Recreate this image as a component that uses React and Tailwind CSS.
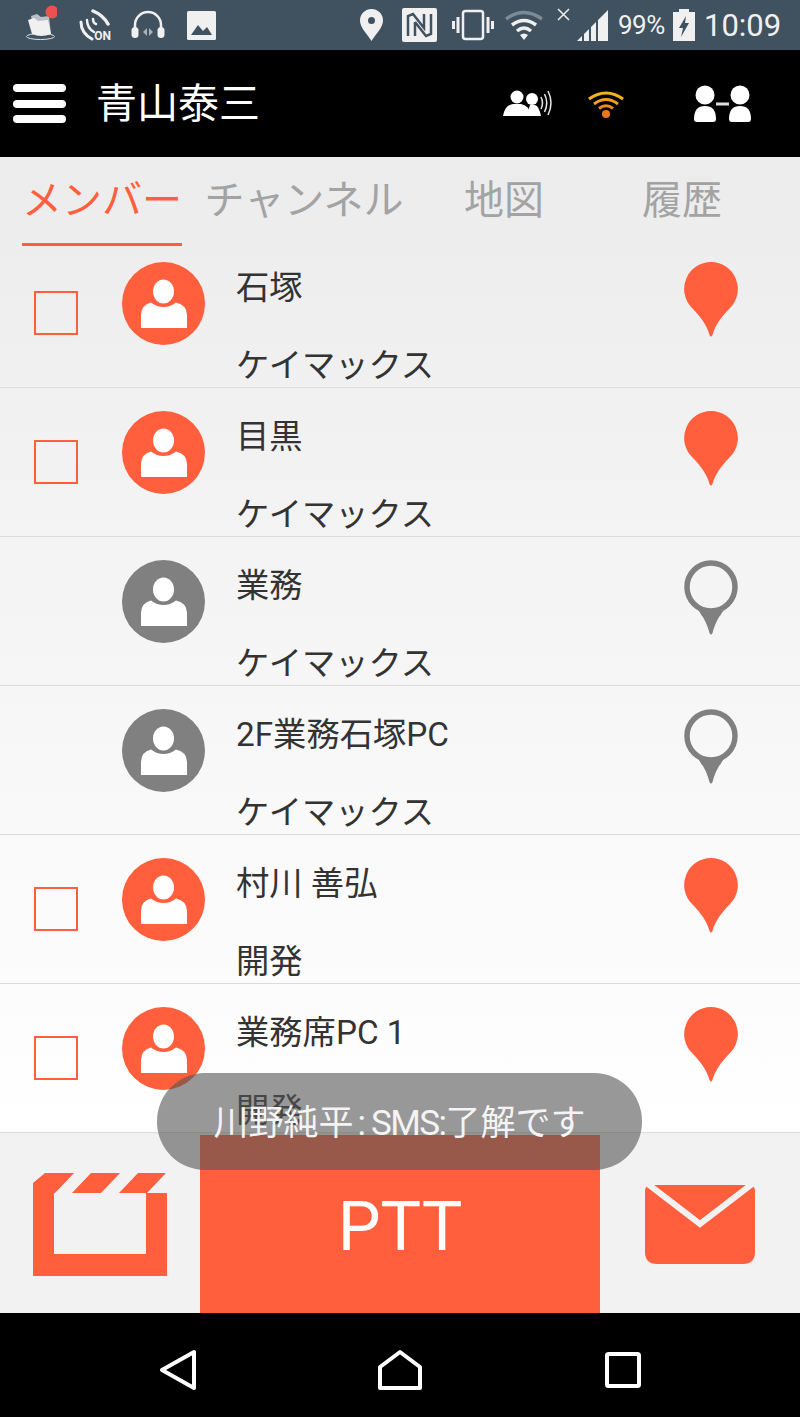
const Pin = ({ on }) =>
  on ? (
    <svg width="54" height="75" viewBox="0 0 54 75">
      <path d="M27 0A27 27 0 0 1 46 46C38 54 31 63 28.5 73Q27 76 25.500 73C23 63 16 54 8 46A27 27 0 0 1 27 0Z" fill="#ff5f3c" />
    </svg>
  ) : (
    <svg width="54" height="75" viewBox="0 0 54 75">
      <circle cx="27" cy="27" r="24" fill="none" stroke="#808080" strokeWidth="5.500" />
      <path d="M11 46C18 52 36 52 43 46C36 54 31 63 28.500 73Q27 76 25.500 73C23 63 18 54 11 46Z" fill="#808080" />
      <path d="M13 46Q27 54 41 46L36 56H18Z" fill="#808080" />
    </svg>
  );

const Avatar = ({ on }) => (
  <svg width="83" height="83" viewBox="0 0 83 83" className="block">
    <circle cx="41.500" cy="41.500" r="41.500" fill={on ? "#ff5f3c" : "#808080"} />
    <ellipse cx="41.500" cy="29.500" rx="10.500" ry="12" fill="#fff" />
    <path d="M19 66V53Q19 43 29 40.500Q35 45 41.500 45Q48 45 54 40.500Q65 43 65 53V66Z" fill="#fff" />
  </svg>
);

const rows = [
  { name: "石塚", org: "ケイマックス", on: true },
  { name: "目黒", org: "ケイマックス", on: true },
  { name: "業務", org: "ケイマックス", on: false },
  { name: "2F業務石塚PC", org: "ケイマックス", on: false },
  { name: "村川 善弘", org: "開発", on: true },
  { name: "業務席PC 1", org: "開発", on: true },
];

const Row = ({ r }) => (
  <div className="flex h-[149px] shrink-0 border-b border-[#dcdcdc] pt-[23px]">
    <div className="w-[122px] shrink-0 pl-[34px] pt-[29px]">
      {r.on && <div className="h-[44px] w-[44px] border-2 border-[#ff5f3c]" />}
    </div>
    <div className="w-[114px] shrink-0">
      <Avatar on={r.on} />
    </div>
    <div className="flex w-[448px] shrink-0 flex-col pt-[2px] text-[33.300px] leading-[48px] text-[#333]">
      <div className="whitespace-pre">{r.name}</div>
      <div className="mt-[30px] whitespace-pre">{r.org}</div>
    </div>
    <div className="shrink-0">
      <Pin on={r.on} />
    </div>
  </div>
);

const Tab = ({ label, w, active }) => (
  <div className={`flex h-full items-center justify-center whitespace-nowrap pt-[2px] text-[40px] ${w} ${active ? "border-b-[3px] border-[#ff5f3c] text-[#ff5f3c]" : "pb-[3px] text-[#a3a3a3]"}`}>
    {label}
  </div>
);

const StatusBar = () => (
  <div className="flex h-[50px] shrink-0 items-center bg-[#40515f] pl-[26px] text-[#f0f0f0]">
    <svg width="31" height="38" viewBox="0 0 31 38" className="-mt-[6px]">
      <ellipse cx="14.500" cy="33.500" rx="14" ry="3" fill="none" stroke="#dfe3e6" strokeWidth="1" />
      <path d="M5 13L11 11L15 14L23 13L25 31H8Z" fill="#b9c0c5" />
      <path d="M2 17L8 15L12 18L22 17L25 31Q15 35 6 31Z" fill="#f0f0f0" />
      <circle cx="26" cy="9" r="6.500" fill="#ec5152" />
    </svg>
    <div className="relative ml-[21px] h-[32px] w-[33px]">
      <svg width="33" height="32" viewBox="0 0 33 32">
        <g fill="none" stroke="#f0f0f0" strokeLinecap="round">
          <path d="M15 2Q25 6 30 15" strokeWidth="3.500" />
          <path d="M3 13Q3 24 14 30" strokeWidth="3" />
          <path d="M9 11Q9 19 16 23" strokeWidth="2.500" />
          <path d="M15 10Q15 14 18 15" strokeWidth="2.500" />
        </g>
      </svg>
      <span className="absolute right-0 bottom-[-1px] font-['Roboto',sans-serif] text-[12px] leading-none font-bold">ON</span>
    </div>
    <svg width="34" height="30" viewBox="0 0 34 30" className="ml-[20px]">
      <path d="M4 19V15a13 13 0 0 1 26 0V19" fill="none" stroke="#f0f0f0" strokeWidth="2.500" />
      <rect x="0.500" y="17" width="7" height="11" rx="3.500" fill="#f0f0f0" />
      <rect x="26.500" y="17" width="7" height="11" rx="3.500" fill="#f0f0f0" />
      <path d="M12 22l4-4v8zM22 22l-4-4v8z" fill="#a9b2b9" />
    </svg>
    <svg width="29" height="29" viewBox="0 0 29 29" className="ml-[22px]">
      <rect width="29" height="29" rx="1.500" fill="#f0f0f0" />
      <path d="M4 24L11 14L16 20L20 16L25 24Z" fill="#40515f" />
    </svg>
    <svg width="23" height="32" viewBox="0 0 23 32" className="ml-[144px]">
      <path fillRule="evenodd" d="M11.500 0A11.500 11.500 0 0 1 23 11.500C23 19 15 26 11.500 32C8 26 0 19 0 11.500A11.500 11.500 0 0 1 11.500 0ZM11.500 8a3.500 3.500 0 1 0 0 7a3.500 3.500 0 0 0 0-7Z" fill="#f0f0f0" />
    </svg>
    <svg width="35" height="34" viewBox="0 0 35 34" className="ml-[19px]">
      <rect width="35" height="34" rx="2" fill="#f0f0f0" />
      <path d="M6 28V8L11 6L22 20V6M13 28V14M13 14L24 28L29 26V6" fill="none" stroke="#40515f" strokeWidth="2.500" />
    </svg>
    <svg width="42" height="32" viewBox="0 0 42 32" className="ml-[15px]">
      <rect x="11" y="2" width="20" height="28" rx="2.500" fill="none" stroke="#f0f0f0" strokeWidth="2.500" />
      <path d="M6 8V24M1.500 12V20M36 8V24M40.500 12V20" stroke="#f0f0f0" strokeWidth="3" />
    </svg>
    <svg width="38" height="32" viewBox="0 0 38 32" className="ml-[11px]">
      <path d="M1 10Q19 -3 37 10" fill="none" stroke="#7d8993" strokeWidth="3.500" />
      <path d="M7 16Q19 7 31 16" fill="none" stroke="#f0f0f0" strokeWidth="3.500" />
      <path d="M12 22Q19 16 26 22" fill="none" stroke="#f0f0f0" strokeWidth="3.500" />
      <path d="M15 26Q19 23 23 26L19 31Z" fill="#f0f0f0" />
    </svg>
    <svg width="15" height="15" viewBox="0 0 15 15" className="-mt-[22px] ml-[13px]">
      <path d="M2 2L13 13M13 2L2 13" stroke="#f0f0f0" strokeWidth="1.500" />
    </svg>
    <svg width="31" height="32" viewBox="0 0 31 32" className="ml-[6px]">
      <path d="M0 32L5 27V32ZM7 25L12 20V32H7ZM14 18L19 13V32H14ZM21 11L31 1V32H21Z" fill="#f0f0f0" />
    </svg>
    <span className="ml-[10px] w-[48px] font-['Roboto',sans-serif] text-[26px] leading-none whitespace-nowrap tracking-[-0.500px]">99%</span>
    <svg width="22" height="32" viewBox="0 0 22 32" className="ml-[7px]">
      <path d="M6 0H16V3H22V32H0V3H6Z" fill="#f0f0f0" />
      <path d="M13 7L6 19H10L8 28L16 14H12Z" fill="#40515f" />
    </svg>
    <span className="ml-[9px] font-['Roboto',sans-serif] text-[31px] leading-none whitespace-nowrap">10:09</span>
  </div>
);

const Header = () => (
  <div className="flex h-[107px] shrink-0 items-center bg-black text-white">
    <div className="ml-[13px] flex w-[53px] flex-col gap-[7.500px]">
      <div className="h-[8px] rounded-full bg-white" />
      <div className="h-[8px] rounded-full bg-white" />
      <div className="h-[8px] rounded-full bg-white" />
    </div>
    <div className="ml-[30px] w-[407px] pt-[1px] text-[41px] leading-none">青山泰三</div>
    <svg width="50" height="28" viewBox="0 0 50 28">
      <circle cx="14" cy="7" r="6.500" fill="#fff" />
      <circle cx="29" cy="9" r="6" fill="#fff" />
      <path d="M0 26Q2 15 10 14H18Q26 15 28 26Z" fill="#fff" />
      <path d="M25 26Q26 17 27 15H32Q36 16 38 26Z" fill="#fff" />
      <path d="M38 7Q41 13 38 19M41.500 4Q46 13 41.500 22M45 1Q51 13 45 25" fill="none" stroke="#e8e8e8" strokeWidth="1.500" />
    </svg>
    <svg width="36" height="28" viewBox="0 0 36 28" className="ml-[35px]">
      <path d="M1 9Q18 -3 35 9" fill="none" stroke="#f5b21f" strokeWidth="3" />
      <path d="M6 14Q18 5 30 14" fill="none" stroke="#f0a01e" strokeWidth="3" />
      <path d="M11 18.500Q18 13 25 18.500" fill="none" stroke="#ea8a20" strokeWidth="3" />
      <circle cx="18" cy="24" r="4" fill="#e9781f" />
    </svg>
    <svg width="57" height="37" viewBox="0 0 57 37" className="ml-[70px]">
      <circle cx="11" cy="10" r="9.500" fill="#fff" />
      <circle cx="46" cy="10" r="9.500" fill="#fff" />
      <path d="M0 34Q0 21 11 21Q22 21 22 34Q22 37 19 37H3Q0 37 0 34Z" fill="#fff" />
      <path d="M35 34Q35 21 46 21Q57 21 57 34Q57 37 54 37H38Q35 37 35 34Z" fill="#fff" />
      <path d="M22 19H35" stroke="#ddd" strokeWidth="3" />
    </svg>
  </div>
);

const BottomBar = () => (
  <div className="flex h-[180px] shrink-0 items-end bg-[#f2f2f2]">
    <div className="flex h-full w-[200px] items-center justify-center pt-[3px]">
      <svg width="134" height="103" viewBox="0 0 134 103">
        <path d="M0 10L12 0H41L22 20H21V81H113V20H134V103H0Z" fill="#ff5f3c" />
        <path d="M39 20L58 0H87L68 20Z" fill="#ff5f3c" />
        <path d="M86 20L105 0H133L114 20Z" fill="#ff5f3c" />
      </svg>
    </div>
    <div className="flex h-[178px] w-[400px] items-center justify-center bg-[#ff5f3c] pt-[5px] font-['Roboto',sans-serif] text-[68px] leading-none text-white">
      PTT
    </div>
    <div className="flex h-full w-[200px] items-center justify-center">
      <svg width="110" height="79" viewBox="0 0 110 79" className="mt-[2px]">
        <path d="M0 6Q0 0 6 0H104Q110 0 110 6V67Q110 79 98 79H12Q0 79 0 67Z" fill="#ff5f3c" />
        <path d="M3 -1L55 39L107 -1" fill="none" stroke="#f2f2f2" strokeWidth="6" />
      </svg>
    </div>
  </div>
);

const NavBar = () => (
  <div className="flex h-[104px] shrink-0 items-center bg-black pt-[9px]">
    <svg width="38" height="42" viewBox="0 0 38 42" className="ml-[159px]">
      <path d="M3 21L35 3V39Z" fill="none" stroke="#fff" strokeWidth="4" strokeLinejoin="round" />
    </svg>
    <svg width="44" height="42" viewBox="0 0 44 42" className="ml-[181px]">
      <path d="M2 18L22 3L42 18V39H2Z" fill="none" stroke="#fff" strokeWidth="4" strokeLinejoin="round" />
    </svg>
    <svg width="36" height="36" viewBox="0 0 36 36" className="ml-[183px]">
      <rect x="2" y="2" width="32" height="32" rx="1.500" fill="none" stroke="#fff" strokeWidth="4" />
    </svg>
  </div>
);

export default function App() {
  return (
    <div className="relative flex h-[1417px] w-[800px] flex-col overflow-hidden font-['Roboto','Noto_Sans_CJK_JP',sans-serif]">
      <StatusBar />
      <Header />
      <div className="flex h-[976px] shrink-0 flex-col overflow-hidden bg-gradient-to-b from-[#ececec] to-[#ffffff]">
        <div className="relative z-10 flex h-[89px] shrink-0 pl-[22px]">
          <Tab label="メンバー" w="w-[160px]" active />
          <Tab label="チャンネル" w="w-[244px]" />
          <Tab label="地図" w="w-[156px]" />
          <Tab label="履歴" w="w-[200px]" />
        </div>
        <div className="-mt-[7px] flex flex-col">
          {rows.map((r, i) => (
            <Row key={i} r={r} />
          ))}
        </div>
      </div>
      <BottomBar />
      <NavBar />
      <div className="absolute top-[1073px] left-[157px] z-20 flex h-[97px] w-[485px] items-center justify-center rounded-[48px] bg-[#545454]/60 pt-[3px] text-[35px] leading-none whitespace-pre text-[#f4f4f4]">
        川野純平<span className="mr-[5px] ml-[4px]">:</span><span className="tracking-[-1.500px]">SMS:</span>了解です
      </div>
    </div>
  );
}
